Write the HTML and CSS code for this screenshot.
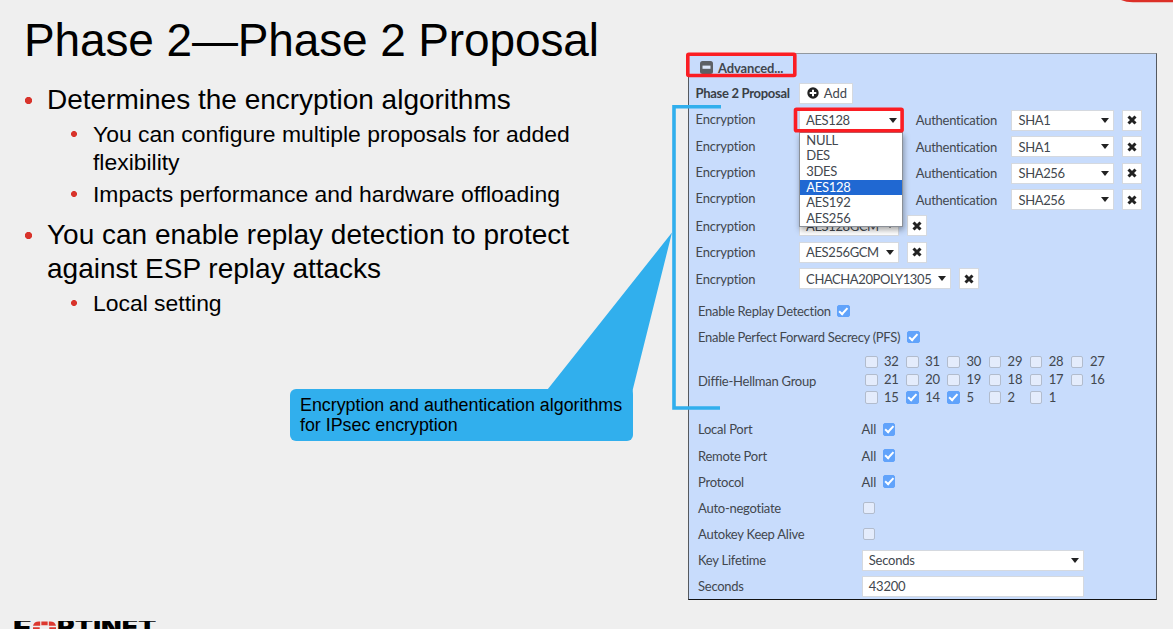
FILE: index.html
```html
<!DOCTYPE html>
<html lang="en">
<head>
<meta charset="utf-8">
<title>Phase 2—Phase 2 Proposal</title>
<link rel="stylesheet" href="styles.css">
</head>
<body>
<main class="slide">
  <section class="copy">
    <h1 class="title">Phase 2—Phase 2 Proposal</h1>
    <ul class="points">
      <li class="point">Determines the encryption algorithms
        <ul class="subpoints">
          <li class="subpoint">You can configure multiple proposals for added<br>flexibility</li>
          <li class="subpoint">Impacts performance and hardware offloading</li>
        </ul>
      </li>
      <li class="point">You can enable replay detection to protect<br>against ESP replay attacks
        <ul class="subpoints">
          <li class="subpoint">Local setting</li>
        </ul>
      </li>
    </ul>
  </section>

  <section class="panel">
    <div class="advanced"><svg class="minus" viewBox="0 0 13 13"><rect width="13" height="13" rx="2.5" fill="#5d6165"/><rect x="2.5" y="4.6" width="8" height="3.2" fill="#dce8fa"/></svg><b class="adv-text">Advanced...</b></div>
    <div class="row head"><b class="label bold">Phase 2 Proposal</b><span class="box add"><svg class="plus" viewBox="0 0 12 12"><circle cx="6" cy="6" r="5.7" fill="#222"/><path d="M6 2.7v6.6M2.7 6h6.6" stroke="#fff" stroke-width="2"/></svg>Add</span></div>

    <div class="row"><span class="label">Encryption</span><span class="box select enc">AES128<i class="caret"></i></span><span class="auth">Authentication</span><span class="box select sha">SHA1<i class="caret"></i></span><span class="box remove"><svg class="cross" viewBox="0 0 10 10"><path d="M1.5 1.5l7 7M8.5 1.5l-7 7"/></svg></span></div>
    <div class="row"><span class="label">Encryption</span><span class="box select enc"></span><span class="auth">Authentication</span><span class="box select sha">SHA1<i class="caret"></i></span><span class="box remove"><svg class="cross" viewBox="0 0 10 10"><path d="M1.5 1.5l7 7M8.5 1.5l-7 7"/></svg></span></div>
    <div class="row"><span class="label">Encryption</span><span class="box select enc"></span><span class="auth">Authentication</span><span class="box select sha">SHA256<i class="caret"></i></span><span class="box remove"><svg class="cross" viewBox="0 0 10 10"><path d="M1.5 1.5l7 7M8.5 1.5l-7 7"/></svg></span></div>
    <div class="row"><span class="label">Encryption</span><span class="box select enc"></span><span class="auth">Authentication</span><span class="box select sha">SHA256<i class="caret"></i></span><span class="box remove"><svg class="cross" viewBox="0 0 10 10"><path d="M1.5 1.5l7 7M8.5 1.5l-7 7"/></svg></span></div>
    <div class="row solo"><span class="label">Encryption</span><span class="box select gcm">AES128GCM<i class="caret"></i></span><span class="box remove"><svg class="cross" viewBox="0 0 10 10"><path d="M1.5 1.5l7 7M8.5 1.5l-7 7"/></svg></span></div>
    <div class="row solo"><span class="label">Encryption</span><span class="box select gcm">AES256GCM<i class="caret"></i></span><span class="box remove"><svg class="cross" viewBox="0 0 10 10"><path d="M1.5 1.5l7 7M8.5 1.5l-7 7"/></svg></span></div>
    <div class="row solo"><span class="label">Encryption</span><span class="box select chacha">CHACHA20POLY1305<i class="caret"></i></span><span class="box remove"><svg class="cross" viewBox="0 0 10 10"><path d="M1.5 1.5l7 7M8.5 1.5l-7 7"/></svg></span></div>

    <div class="options">
      <div class="opt"><span class="replay">Enable Replay Detection</span><i class="check on"></i></div>
      <div class="opt"><span class="pfs">Enable Perfect Forward Secrecy (PFS)</span><i class="check on"></i></div>
      <div class="opt dh"><span class="name">Diffie-Hellman Group</span>
        <div class="groups">
          <span class="grp"><i class="check"></i><span>32</span></span><span class="grp"><i class="check"></i><span>31</span></span><span class="grp"><i class="check"></i><span>30</span></span><span class="grp"><i class="check"></i><span>29</span></span><span class="grp"><i class="check"></i><span>28</span></span><span class="grp"><i class="check"></i><span>27</span></span>
          <span class="grp"><i class="check"></i><span>21</span></span><span class="grp"><i class="check"></i><span>20</span></span><span class="grp"><i class="check"></i><span>19</span></span><span class="grp"><i class="check"></i><span>18</span></span><span class="grp"><i class="check"></i><span>17</span></span><span class="grp"><i class="check"></i><span>16</span></span>
          <span class="grp"><i class="check"></i><span>15</span></span><span class="grp"><i class="check on"></i><span>14</span></span><span class="grp"><i class="check on"></i><span>5</span></span><span class="grp"><i class="check"></i><span>2</span></span><span class="grp"><i class="check"></i><span>1</span></span>
        </div>
      </div>
      <div class="opt"><span class="name">Local Port</span><span class="all">All</span><i class="check on"></i></div>
      <div class="opt"><span class="name">Remote Port</span><span class="all">All</span><i class="check on"></i></div>
      <div class="opt"><span class="name">Protocol</span><span class="all">All</span><i class="check on"></i></div>
      <div class="opt"><span class="name">Auto-negotiate</span><i class="check lone"></i></div>
      <div class="opt"><span class="name">Autokey Keep Alive</span><i class="check lone"></i></div>
      <div class="opt"><span class="name">Key Lifetime</span><span class="box select wide">Seconds<i class="caret"></i></span></div>
      <div class="opt"><span class="name">Seconds</span><span class="box wide">43200</span></div>
    </div>

    <div class="menu">
      <span class="item">NULL</span><span class="item">DES</span><span class="item">3DES</span><span class="item active">AES128</span><span class="item">AES192</span><span class="item">AES256</span>
    </div>
  </section>

  <svg class="annotations" viewBox="0 0 1173 629">
    <path d="M547.5 389.5L672 232.5L632.8 389.5V396H547.5z" fill="#31afed"/>
    <path d="M721 106.800H674V408H720" fill="none" stroke="#31afed" stroke-width="3.600"/>
    <rect x="687.800" y="54.200" width="107" height="21.300" rx="1" fill="none" stroke="#fb1d23" stroke-width="3.600"/>
    <rect x="795.500" y="109.300" width="106.600" height="21.400" rx="1" fill="none" stroke="#fb1d23" stroke-width="3.600"/>
    <path d="M1121 0Q1126 2.300 1133 2.300H1173V0z" fill="#dc2f27"/>
  </svg>
  <div class="callout">Encryption and authentication algorithms<br>for IPsec encryption</div>
  <div class="logo"><span class="word f">F</span><svg class="o" viewBox="0 0 24 18"><path d="M0 4.500Q1 0 6 0H7.500V4.500zM8.700 0h6.600v4H8.700zM16.500 0H18Q23 0 24 4.500H16.500zM0 6h7v6H0zM17 6h7v6h-7z" fill="#dc382f"/></svg><span class="word rest">RTINET</span></div>
</main>
</body>
</html>
```
FILE: styles.css
```css
* { box-sizing: border-box; }
html, body { margin: 0; overflow: hidden; }
.slide {
  position: relative; width: 1173px; height: 629px; overflow: hidden;
  display: grid; grid-template-columns: 688px 468.5px; align-items: start;
  background: #efefef; color: #000; font-family: "Liberation Sans", Arial, sans-serif;
}
.copy { padding: 13px 0 0 24px; }
.title { margin: 0; font-size: 46px; line-height: 54px; font-weight: 400; white-space: nowrap; letter-spacing: -.13px; }
.points, .subpoints { list-style: none; margin: 0; padding: 0; }
.points { padding-top: 16px; }
.point { font-size: 28px; line-height: 34px; padding-left: 23px; margin-bottom: 10px; background: radial-gradient(circle at 4.500px 17.500px, #d8332b 3.200px, transparent 4px); white-space: nowrap; }
.subpoints { padding: 3px 0 0; }
.subpoint { font-size: 22.920px; line-height: 28px; padding-left: 46px; margin-bottom: 4px; background: radial-gradient(circle at 27px 14px, #d8332b 2.600px, transparent 3.400px); }

.panel {
  position: relative; height: 547px; margin-top: 53px; padding-top: 1px;
  background: #c8dcfc; border: 1px solid #55595f; border-top-color: #92989f; border-bottom-color: #111; border-right-width: 1.500px;
  font: 13px/16px Lato, sans-serif; color: #42474e; white-space: nowrap;
}
.advanced { height: 25px; display: flex; align-items: center; padding-left: 11px; letter-spacing: -.13px; }
.minus { width: 13px; height: 13px; margin-right: 5px; }
.row { display: flex; align-items: center; height: 26.350px; padding-left: 6.500px; }
.head { height: 26px; margin-bottom: 1.300px; }
.label { width: 103.300px; padding-bottom: 2.500px; letter-spacing: -.2px; }
.solo .label { padding-bottom: 0; }
.bold { color: #3a3f46; padding: 0; letter-spacing: -.3px; }
.box { display: flex; align-items: center; height: 21px; padding-left: 6.300px; background: #fff; border: 1px solid #d5d9df; letter-spacing: -.4px; }
.add { width: 54px; padding-left: 7px; letter-spacing: 0; }
.plus { width: 12px; height: 12px; margin-right: 5px; }
.select { justify-content: space-between; padding-right: 4px; }
.caret { border: 4.500px solid transparent; border-top: 5px solid #222; border-bottom: 0; }
.enc { width: 103px; }
.auth { width: 95.500px; margin-left: 14px; letter-spacing: -.25px; }
.sha { width: 103px; }
.remove { width: 20px; padding: 0; justify-content: center; margin-left: 8px; }
.cross { width: 10px; height: 10px; stroke: #222; stroke-width: 3; }
.gcm { width: 100px; }
.chacha { width: 152.500px; }

.options { padding: 6.200px 0 0 9px; }
.opt { display: flex; align-items: center; height: 26.200px; }
.replay { width: 139px; letter-spacing: -.28px; }
.pfs { width: 209px; letter-spacing: -.3px; }
.name { width: 163.500px; letter-spacing: -.25px; }
.check { display: block; width: 12.500px; height: 12.500px; border: 1px solid #b2bccd; border-radius: 2px; background: #e4ecfc; flex: none; }
.on { border-color: #61a3fb; background: #61a3fb; position: relative; }
.on::after { content: ""; position: absolute; left: 3px; top: -.2px; width: 3px; height: 6.500px; border: solid #fff; border-width: 0 2px 2px 0; transform: rotate(42deg); box-sizing: content-box; }
.all { width: 21px; }
.lone { margin-left: 1px; }
.dh { height: 66px; padding-bottom: 5px; }
.groups { display: grid; grid-template-columns: repeat(6, 41.200px); grid-auto-rows: 17.800px; padding-left: 3.500px; margin-top: -2px; }
.grp { display: flex; align-items: center; gap: 6.500px; letter-spacing: -.2px; }
.grp span { padding-bottom: 2px; }
.wide { width: 222.500px; letter-spacing: -.25px; }

.menu { position: absolute; left: 110px; top: 77.500px; width: 104px; height: 95px; background: #fff; border: 1px solid #8b9098; box-shadow: 1px 3px 6px rgba(0,0,0,.35); }
.item { display: block; height: 15.700px; line-height: 15.700px; padding-left: 6.300px; letter-spacing: -.3px; }
.active { background: #2068d2; color: #fff; }

.annotations { position: absolute; inset: 0; width: 1173px; height: 629px; }
.callout { position: absolute; left: 290px; top: 389px; width: 343px; height: 52px; border-radius: 6px; background: #31afed; padding: 6px 0 0 10px; font-size: 17.830px; line-height: 20px; white-space: nowrap; }
.logo { position: absolute; left: 14px; top: 621px; width: 142px; height: 8px; overflow: hidden; }
.word { position: absolute; top: -5px; font: 900 24px/24px Inter, sans-serif; transform-origin: 0 0; }
.f { left: -1px; transform: scaleX(1.300); }
.o { position: absolute; left: 19px; top: 0; width: 23px; height: 18px; }
.rest { left: 43px; transform: scaleX(1.115); }
```
